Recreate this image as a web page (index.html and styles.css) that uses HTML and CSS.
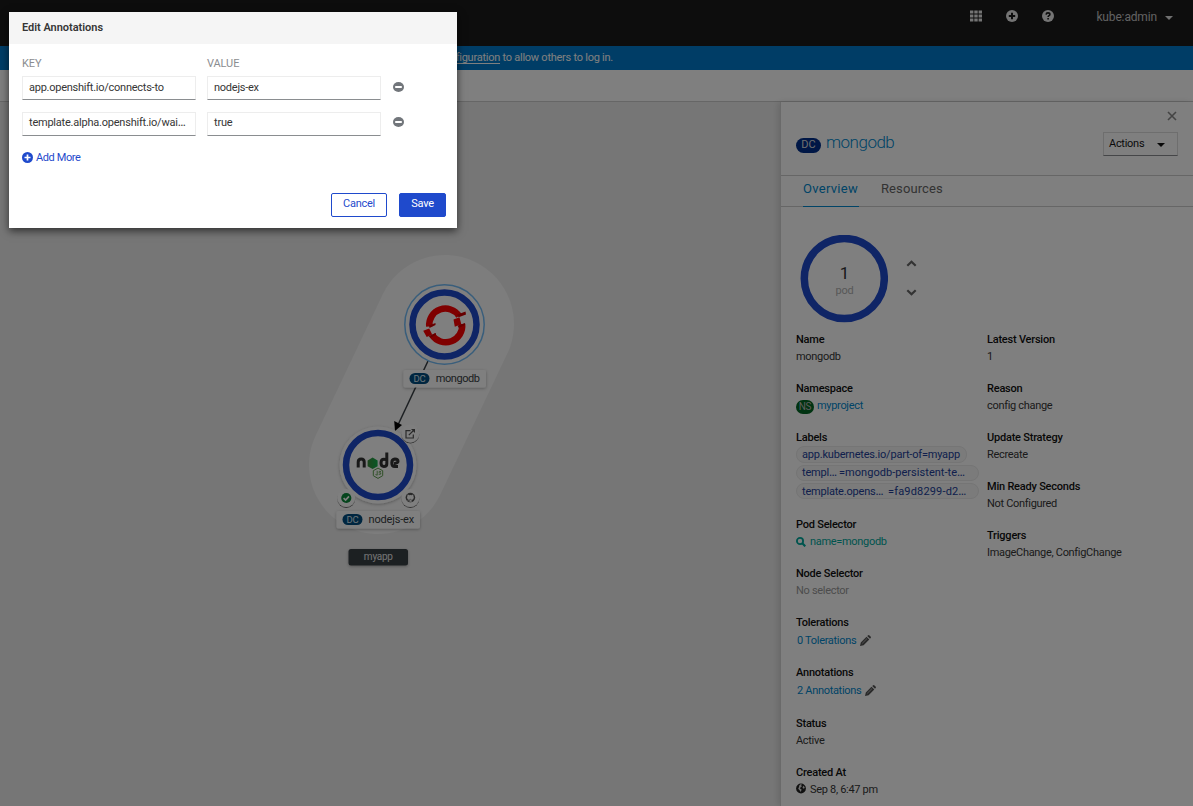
FILE: index.html
```html
<!DOCTYPE html>
<html lang="en">
<head>
<meta charset="utf-8">
<title>Edit Annotations</title>
<link rel="stylesheet" href="styles.css">
</head>
<body>
<div class="page">
  <header class="masthead">
    <svg class="mast-icon" viewBox="0 0 12 12"><path fill="currentColor" d="M0 .5h3.400v3H0zM4.300.5h3.400v3H4.300zM8.600.5H12v3H8.600zM0 4.500h3.400v3H0zM4.300 4.500h3.400v3H4.300zM8.600 4.500H12v3H8.600zM0 8.500h3.400v3H0zM4.300 8.500h3.400v3H4.300zM8.600 8.500H12v3H8.600z"/></svg>
    <svg class="mast-icon" viewBox="0 0 12 12"><circle cx="6" cy="6" r="6" fill="currentColor"/><path d="M6 2.800v6.400M2.800 6h6.400" stroke="#1a1a1a" stroke-width="2"/></svg>
    <svg class="mast-icon" viewBox="0 0 12 12"><circle cx="6" cy="6" r="6" fill="currentColor"/><path d="M4.100 4.600C4.200 3.300 5 2.900 6 2.900c1.100 0 1.900.6 1.900 1.500 0 1.300-1.800 1.300-1.800 2.600M6.100 8.100v1.500" fill="none" stroke="#1a1a1a" stroke-width="1.600"/></svg>
    <span class="user">kube:admin</span>
    <span class="caret"></span>
  </header>
  <div class="banner"><span class="banner-text"><a class="banner-link">cluster OAuth configuration</a> to allow others to log in.</span></div>
  <div class="toolbar"></div>
  <main class="content">
    <section class="canvas">
      <svg class="graph" width="780" height="704" viewBox="0 102 780 704">
        <defs>
          <filter id="soft" x="-20%" y="-20%" width="140%" height="150%"><feDropShadow dx="0" dy="1" stdDeviation="1.500" flood-opacity=".3"/></filter>
          <filter id="lift" x="-20%" y="-20%" width="140%" height="150%"><feDropShadow dx="0" dy="1" stdDeviation=".6" flood-opacity=".6"/></filter>
          <linearGradient id="leaf" x1="0" y1="0" x2="1" y2="0"><stop offset="0" stop-color="#3f8b3d"/><stop offset="1" stop-color="#10b04c"/></linearGradient>
        </defs>
        <path class="group-hull" d="M445 324L378 465"/>
        <path class="edge" d="M428 361L397 427"/>
        <path d="M395 431L394.200 421L402 425Z" fill="#030303"/>

        <circle cx="444.500" cy="324.500" r="39.700" fill="#fff" stroke="#73bcf7" stroke-width="1.500"/>
        <circle class="ring" cx="444.500" cy="324.500" r="32"/>
        <g fill="none" stroke="#f00" stroke-width="6.500">
          <path d="M429.300 326.500A16.200 16.200 0 0 1 459 316"/>
          <path d="M462.100 324A16.500 16.500 0 0 1 432 335"/>
        </g>
        <path fill="#f00" d="M453.500 319.500l6-2.300 1.800 7-6.500 2.500zM423.200 330.800l6-2.200 3 6-5.500 2.400z"/>
        <path fill="#c00" d="M457 314.800l8.500-3.200.5 2.900-7.300 2.800zM457.500 325.700l7.500-2.800v2l-6 3zM429 325.500l6.500-2.600v2.200l-6 2.900zM428.500 336l7.500-3v2l-5.500 2.800z"/>

        <g filter="url(#soft)"><rect x="403.500" y="370" width="82.500" height="17.500" rx="2" fill="#fff"/></g>
        <rect x="409.500" y="373" width="20" height="11" rx="5.500" fill="#004d80"/>
        <text class="badge-label" x="419.500" y="381.700">DC</text>
        <text class="node-label" x="435.800" y="382.300">mongodb</text>

        <circle cx="378" cy="465" r="38.500" fill="#fff" filter="url(#soft)"/>
        <circle class="ring" cx="378" cy="465" r="32"/>
        <g fill="none" stroke="#333" stroke-width="3">
          <path d="M358.200 467.500v-5.500q0-3 3-3t3 3v5.500"/>
          <path d="M386.800 452.500v11.500q0 2.500-2.900 2.500-2.900 0-2.900-3.400 0-3.800 2.900-3.800 1.600 0 2.900.6"/>
          <path d="M398 466.500h-3.200q-3 0-3-3.600t3.100-3.800q3.100 0 3.100 2.500 0 1.500-4 2.100"/>
        </g>
        <path d="M372.600 457.500l5 2.900v5.800l-5 2.900-5-2.900v-5.800z" fill="url(#leaf)"/>
        <path d="M378 468.100l4.700 2.600v5l-4.700 2.700-4.700-2.700v-5z" fill="none" stroke="#5fa04e"/>
        <path d="M377.200 470.800v4.400l-1.700-.7M381 471.500q-2.300-.6-2.100.7.200.8 1.900.7.700 1.900-2.100 1.400" fill="none" stroke="#5fa04e" stroke-width=".9"/>

        <circle cx="410.300" cy="433.500" r="9" fill="#fff" filter="url(#lift)"/>
        <path d="M410.500 430.700H406V438H413.300V434.500M408.800 435.200L413.500 430.500" fill="none" stroke="#555" stroke-width="1.200"/><path d="M411 429H415V433Z" fill="#555"/>
        <circle cx="346.200" cy="498" r="9" fill="#fff" filter="url(#lift)"/>
        <circle cx="346.300" cy="498" r="5.100" fill="#0b8a3a"/><path d="M343.600 498.100l2 2 3.400-3.700" fill="none" stroke="#fff" stroke-width="1.700"/>
        <circle cx="410.300" cy="498" r="9" fill="#fff" filter="url(#lift)"/>
        <circle cx="410.400" cy="497.600" r="4.800" fill="#555"/>
        <path d="M408.900 503v-3.100q-1.900-.4-1.900-2.400 0-.9.500-1.500-.2-.8.100-1.400.8 0 1.500.6 1.300-.3 2.600 0 .7-.6 1.500-.6.300.6.100 1.400.5.600.5 1.500 0 2-1.900 2.400V503z" fill="#fff"/>
        <path d="M409.500 502.100v-2.200q0-.4.300-.6h1.200q.3.200.3.600v2.200zM406.800 499.700q.8 1.500 2.400 1.100" fill="#fff" stroke="#555" stroke-width=".5"/>

        <g filter="url(#soft)"><rect x="336.500" y="511" width="83.500" height="17.500" rx="2" fill="#fff"/></g>
        <rect x="342.500" y="514" width="20" height="11" rx="5.500" fill="#004d80"/>
        <text class="badge-label" x="352.500" y="522.700">DC</text>
        <text class="node-label ex" x="368.500" y="523.300">nodejs-ex</text>

        <g filter="url(#soft)"><rect x="348.500" y="549" width="59.500" height="16.500" rx="2.500" fill="#393f44"/></g>
        <text class="app-label" x="378.300" y="560.300">myapp</text>
      </svg>
    </section>
    <aside class="panel">
      <div class="panel-head">
        <svg class="close" viewBox="0 0 10 10"><path d="M1 1l8 8M9 1L1 9" stroke="currentColor" stroke-width="1.600"/></svg>
        <div class="title-row">
          <span class="kind">DC</span><span class="title">mongodb</span>
          <span class="actions">Actions<i class="caret dark"></i></span>
        </div>
      </div>
      <nav class="tabs"><span class="tab active">Overview</span><span class="tab">Resources</span></nav>
      <div class="pods">
        <svg class="donut" width="88" height="88" viewBox="0 0 88 88"><circle cx="44.300" cy="43.500" r="40" fill="none" stroke="#1f4acc" stroke-width="7.500"/><text class="pod-count" x="44.500" y="44">1</text><text class="pod-word" x="44.500" y="59">pod</text></svg>
        <div class="steps">
          <svg width="11" height="7" viewBox="0 0 11 7"><path d="M1.300 5.700l4.200-4 4.200 4" class="chev"/></svg>
          <svg width="11" height="7" viewBox="0 0 11 7"><path d="M1.300 1.300l4.200 4 4.200-4" class="chev"/></svg>
        </div>
      </div>
      <div class="details">
        <dl class="col">
          <dt>Name</dt><dd>mongodb</dd>
          <dt>Namespace</dt><dd><span class="ns">NS</span><a class="link">myproject</a></dd>
          <dt>Labels</dt>
          <dd class="chips"><span class="chip first">app.kubernetes.io/part-of=myapp</span><span class="chip second">templ<i class="dots">…</i><b class="eq">=mongodb-persistent-te<i class="dots">…</i></b></span><span class="chip third">template.opens<i class="dots">…</i> <b class="eq">=fa9d8299-d2<i class="dots">…</i></b></span></dd>
          <dt>Pod Selector</dt>
          <dd><a class="search"><svg width="10" height="10" viewBox="0 0 10 10"><circle cx="4" cy="4" r="3.100" fill="none" stroke="currentColor" stroke-width="1.800"/><path d="M6.300 6.300L9.300 9.300" stroke="currentColor" stroke-width="2.200"/></svg>name=mongodb</a></dd>
          <dt>Node Selector</dt><dd class="muted">No selector</dd>
          <dt>Tolerations</dt>
          <dd class="edit tol"><a class="link">0 Tolerations</a><svg class="pencil" viewBox="0 0 11 11"><path d="M0 11l.8-3.600L6.500 1.700 9.300 4.500 3.600 10.200zM7.200 1L8.200.2q.5-.4 1 0L10.800 1.800q.4.500 0 1L10 3.800z" fill="currentColor"/><path d="M2.200 8.400L7 3.600" stroke="#ddd" stroke-width=".6"/></svg></dd>
          <dt>Annotations</dt>
          <dd class="edit ann"><a class="link">2 Annotations</a><svg class="pencil" viewBox="0 0 11 11"><path d="M0 11l.8-3.600L6.500 1.700 9.300 4.500 3.600 10.200zM7.200 1L8.200.2q.5-.4 1 0L10.800 1.800q.4.500 0 1L10 3.800z" fill="currentColor"/><path d="M2.200 8.400L7 3.600" stroke="#ddd" stroke-width=".6"/></svg></dd>
          <dt>Status</dt><dd>Active</dd>
          <dt>Created At</dt>
          <dd><svg class="globe" viewBox="0 0 10 10"><circle cx="5" cy="5" r="4.900" fill="#222"/><path d="M4.500.8L5.800.7 5.200 2 6 2.800 4.600 3.800 4 5 5.600 6 4.800 8.600 3.400 6.600 2.200 5.200 3 3.600 3.200 2zM7.200 2.200l1.600 1.600-.8 1.400-1.500-.6z" fill="#ddd"/></svg>Sep 8, 6:47 pm</dd>
        </dl>
        <dl class="col right">
          <dt>Latest Version</dt><dd>1</dd>
          <dt>Reason</dt><dd>config change</dd>
          <dt>Update Strategy</dt><dd>Recreate</dd>
          <dt>Min Ready Seconds</dt><dd>Not Configured</dd>
          <dt>Triggers</dt><dd>ImageChange, ConfigChange</dd>
        </dl>
      </div>
    </aside>
  </main>
</div>
<div class="backdrop">
  <div class="modal">
    <h1 class="modal-title">Edit Annotations</h1>
    <div class="modal-body">
      <div class="form-grid">
        <span class="head">KEY</span><span class="head">VALUE</span><span></span>
        <span class="field">app.openshift.io/connects-to</span><span class="field">nodejs-ex</span>
        <svg class="minus" viewBox="0 0 11 10"><ellipse cx="5.500" cy="5" rx="5.500" ry="5" fill="#72767b"/><path d="M2.200 5h6.600" stroke="#fff" stroke-width="2"/></svg>
        <span class="field low">template.alpha.openshift.io/wai<i class="dots">…</i></span><span class="field low">true</span>
        <svg class="minus up" viewBox="0 0 11 10"><ellipse cx="5.500" cy="5" rx="5.500" ry="5" fill="#72767b"/><path d="M2.200 5h6.600" stroke="#fff" stroke-width="2"/></svg>
      </div>
      <a class="add"><svg width="11" height="11" viewBox="0 0 11 11"><circle cx="5.500" cy="5.500" r="5.500" fill="currentColor"/><path d="M5.500 2.500v6M2.500 5.500h6" stroke="#fff" stroke-width="1.700"/></svg>Add More</a>
    </div>
    <div class="modal-foot"><span class="btn cancel">Cancel</span><span class="btn save">Save</span></div>
  </div>
</div>
</body>
</html>
```
FILE: styles.css
```css
* { box-sizing: border-box; }
body { margin: 0; width: 1193px; height: 806px; overflow: hidden; position: relative; font: 400 11px/17px Roboto, "Liberation Sans", sans-serif; letter-spacing: -0.28px; color: #363636; }
svg { display: block; flex: none; }
.page { display: flex; flex-direction: column; height: 806px; }

.masthead { height: 46px; flex: none; background: #1a1a1a; color: #e8e8e8; display: flex; justify-content: flex-end; padding: 10px 20px 0 0; }
.mast-icon { width: 12px; height: 12px; margin-right: 24px; }
.user { font-size: 12px; line-height: 15px; letter-spacing: -0.15px; color: #c4c4c4; margin: 0 8px 0 18px; }
.caret { width: 0; height: 0; border: 4px solid transparent; border-top: 4px solid #e0e0e0; border-bottom: 0; margin-top: 6px; }

.banner { height: 24px; flex: none; background: #007acc; color: #fff; padding: 3px 0 0; display: flex; }
.banner-text { width: 613px; text-align: right; letter-spacing: -0.25px; }
.banner-link { text-decoration: underline; text-underline-offset: 2px; }
.toolbar { height: 32px; flex: none; background: #fff; border-bottom: 1px solid #ccc; }

.content { flex: 1; min-height: 0; display: flex; }
.canvas { width: 780px; flex: none; background: #ededed; }
.group-hull { stroke: #fafafa; stroke-width: 138; stroke-linecap: round; }
.edge { stroke: #393f44; stroke-width: 1.5; }
.ring { fill: none; stroke: #1f4acc; stroke-width: 6.5; }
.badge-label { font-size: 9.5px; fill: #d8e6f0; text-anchor: middle; letter-spacing: -0.2px; }
.node-label { font-size: 11px; fill: #393f44; letter-spacing: -0.45px; }
.ex { letter-spacing: -0.17px; }
.app-label { font-size: 10px; fill: #e8e8e8; text-anchor: middle; letter-spacing: -0.25px; }

.panel { flex: 1; background: #fff; border-left: 1px solid #d4d4d4; box-shadow: -2px 0 6px rgba(0,0,0,.12); }
.panel-head { height: 74px; border-bottom: 1px solid #ccc; padding: 9px 15px 0; }
.close { width: 10px; height: 10px; margin: 0 1px 0 auto; color: #888; }
.title-row { display: flex; padding-top: 9px; }
.kind { width: 25px; height: 15px; border-radius: 8px; background: #002f8c; color: #ddd; font-size: 11px; line-height: 14px; text-align: center; margin-top: 8px; letter-spacing: 0; }
.title { font-size: 17px; line-height: 24px; font-weight: 300; color: #0088ce; letter-spacing: -0.5px; margin-left: 5px; }
.actions { margin-left: auto; margin-top: 2px; width: 75px; height: 24px; border: 1px solid #ddd; border-bottom-color: #8a8d90; padding: 2px 12px 0 5px; display: flex; justify-content: space-between; color: #151515; }
.actions .caret { margin-top: 8px; }
.dark { border-top-color: #111; }
.tabs { height: 31px; border-bottom: 1px solid #ccc; padding-left: 22px; display: flex; gap: 22px; font-size: 13px; line-height: 26px; }
.tab { height: 31px; color: #666; letter-spacing: 0.1px; }
.active { border-bottom: 1px solid #0088ce; color: #0088ce; width: 56px; letter-spacing: 0.3px; }

.pods { display: flex; padding: 28px 0 0 19px; gap: 18px; height: 123px; }
.steps { display: flex; flex-direction: column; gap: 22px; padding-top: 25px; }
.chev { fill: none; stroke: #666; stroke-width: 2.2; }
.pod-count { font-size: 17px; fill: #333; text-anchor: middle; }
.pod-word { font-size: 11px; fill: #b0b0b0; text-anchor: middle; letter-spacing: -0.2px; }

.details { display: grid; grid-template-columns: 191px 1fr; padding: 1px 0 0 15px; }
.col { margin: 0; }
dt { height: 17px; font-weight: 500; color: #111; letter-spacing: -0.22px; }
dd { height: 17px; margin: 0 0 15px; display: flex; align-items: center; white-space: nowrap; letter-spacing: -0.31px; }
.link { color: #0088ce; }
.ns { width: 18px; height: 14px; border-radius: 7px; background: #006622; color: #bbb; font-size: 10px; line-height: 13px; text-align: center; margin: 2px 3px 0 0; }
.chips { height: 55px; display: block; }
.chip { display: block; width: 183px; height: 16px; line-height: 15px; margin-bottom: 2px; padding-left: 5px; border: 1px solid #eaeaea; border-radius: 8px; background: #f6f6f6; color: #223f9a; letter-spacing: -0.2px; }
.first { width: 171px; height: 17px; }
.second { line-height: 13px; }
.dots { font-style: normal; font-size: 12px; line-height: 1; letter-spacing: 0; }
.eq { font-weight: 400; letter-spacing: 0.04px; margin-left: 2px; }
.third .eq { margin-left: 2px; letter-spacing: 0.16px; }
.search { color: #00a99d; display: flex; gap: 4px; align-items: center; }
.muted { color: #999; }
.edit { padding-left: 1px; }
.tol { height: 18px; padding-top: 1px; }
.ann { height: 19px; padding-bottom: 1px; }
.pencil { width: 11px; height: 11px; margin-left: 4px; color: #555; }
.globe { width: 10px; height: 11px; margin: -3px 4px 0 0; }

.backdrop { position: absolute; inset: 0; background: rgba(0,0,0,.5); padding: 12px 0 0 9px; }
.modal { width: 448px; height: 216px; background: #fff; box-shadow: 0 3px 8px rgba(0,0,0,.6); display: flex; flex-direction: column; }
.modal-title { margin: 0; height: 32px; flex: none; background: #f5f5f5; padding-left: 13px; font-size: 11px; line-height: 31px; font-weight: 600; letter-spacing: -0.03px; color: #363636; }
.modal-body { flex: 1; padding: 11px 13px 0; }
.form-grid { display: grid; grid-template-columns: 174px 174px 11px; grid-template-rows: 9px 24px 24px; gap: 12px 11px; }
.head { color: #8b8d90; line-height: 17px; height: 17px; letter-spacing: -0.1px; }
.field { border: 1px solid #ededed; border-bottom-color: #8a8d90; padding: 2px 6px 0; height: 24px; white-space: nowrap; line-height: 18px; letter-spacing: -0.25px; }
.low { padding-top: 1px; letter-spacing: -0.22px; }
.minus { width: 11px; height: 10px; margin: 6px 0 0 1px; }
.up { margin-top: 5px; }
.add { display: flex; align-items: center; gap: 3px; margin-top: 13px; color: #1f4acc; letter-spacing: -0.4px; }
.modal-foot { display: flex; justify-content: flex-end; gap: 12px; padding: 0 11px 11px 0; }
.btn { height: 24px; border: 1px solid #1f4acc; border-radius: 2px; line-height: 20px; text-align: center; color: #1f4acc; }
.cancel { width: 56px; }
.save { width: 47px; background: #1f4acc; color: #fff; }
```
